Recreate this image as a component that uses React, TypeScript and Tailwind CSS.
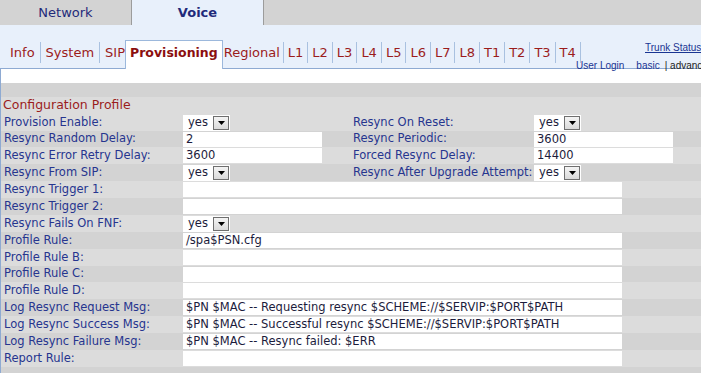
type Field =
  | { kind: 'select'; value: string }
  | { kind: 'text'; value: string }
  | { kind: 'wide'; value: string }

type Row = {
  label: string
  field: Field
  label2?: string
  field2?: Field
}

const subTabs = ['Info', 'System', 'SIP', 'Provisioning', 'Regional', 'L1', 'L2', 'L3', 'L4', 'L5', 'L6', 'L7', 'L8', 'T1', 'T2', 'T3', 'T4']

const rows: Row[] = [
  { label: 'Provision Enable:', field: { kind: 'select', value: 'yes' }, label2: 'Resync On Reset:', field2: { kind: 'select', value: 'yes' } },
  { label: 'Resync Random Delay:', field: { kind: 'text', value: '2' }, label2: 'Resync Periodic:', field2: { kind: 'text', value: '3600' } },
  { label: 'Resync Error Retry Delay:', field: { kind: 'text', value: '3600' }, label2: 'Forced Resync Delay:', field2: { kind: 'text', value: '14400' } },
  { label: 'Resync From SIP:', field: { kind: 'select', value: 'yes' }, label2: 'Resync After Upgrade Attempt:', field2: { kind: 'select', value: 'yes' } },
  { label: 'Resync Trigger 1:', field: { kind: 'wide', value: '' } },
  { label: 'Resync Trigger 2:', field: { kind: 'wide', value: '' } },
  { label: 'Resync Fails On FNF:', field: { kind: 'select', value: 'yes' } },
  { label: 'Profile Rule:', field: { kind: 'wide', value: '/spa$PSN.cfg' } },
  { label: 'Profile Rule B:', field: { kind: 'wide', value: '' } },
  { label: 'Profile Rule C:', field: { kind: 'wide', value: '' } },
  { label: 'Profile Rule D:', field: { kind: 'wide', value: '' } },
  { label: 'Log Resync Request Msg:', field: { kind: 'wide', value: '$PN $MAC -- Requesting resync $SCHEME://$SERVIP:$PORT$PATH' } },
  { label: 'Log Resync Success Msg:', field: { kind: 'wide', value: '$PN $MAC -- Successful resync $SCHEME://$SERVIP:$PORT$PATH' } },
  { label: 'Log Resync Failure Msg:', field: { kind: 'wide', value: '$PN $MAC -- Resync failed: $ERR' } },
  { label: 'Report Rule:', field: { kind: 'wide', value: '' } },
]

const SelectBox = ({ value }: { value: string }) => (
  <div className="flex items-center h-[16px] w-[47px] bg-white">
    <span className="pl-[5px] w-[30px] text-[#1c1c3c]">{value}</span>
    <div className="flex items-center justify-center w-[16px] h-[14px] border border-[#6f6f6f] bg-gradient-to-b from-[#f4f4f4] to-[#dadada]">
      <svg width="7" height="4" viewBox="0 0 7 4">
        <path d="M0 0 H7 L3.5 4 Z" fill="#000" />
      </svg>
    </div>
  </div>
)

const FieldCell = ({ field }: { field: Field }) => {
  if (field.kind === 'select') return <SelectBox value={field.value} />
  return (
    <div
      className={`h-[15px] bg-white pl-[3px] leading-[15px] text-[#1c1c3c] whitespace-nowrap overflow-hidden ${
        field.kind === 'wide' ? 'w-[439px]' : 'w-[139px]'
      }`}
    >
      {field.value}
    </div>
  )
}

export default function App() {
  return (
    <div className="w-[701px] h-[373px] overflow-hidden bg-white font-['DejaVu_Sans',Verdana,sans-serif]">
      {/* top tabs */}
      <div className="flex h-[25px] bg-[#d3d3d3] text-[13px] text-[#1f2a7a]">
        <div className="w-[132px] flex items-center justify-center border-r border-[#9c9c9c]">Network</div>
        <div className="w-[132px] flex items-center justify-center bg-[#e8f0fb] font-bold border-r border-[#9c9c9c]">Voice</div>
        <div className="flex-1" />
      </div>

      {/* sub tabs */}
      <div className="relative flex items-end h-[44px] pl-[5px] bg-[#e8f0fb] border-b border-[#8eaad2] text-[13px] text-[#9b1c1c]">
        {subTabs.map((t, i) => {
          if (t === 'Provisioning') {
            return (
              <div
                key={t}
                className="h-[29px] -mb-px px-[4px] pb-[3px] flex items-center bg-white border-x border-t border-[#9cb8dc] font-bold text-[12.5px] text-[#8b0f0f]"
              >
                {t}
              </div>
            )
          }
          const short = t.length === 2
          const beforeActive = subTabs[i + 1] === 'Provisioning'
          const afterActive = subTabs[i - 1] === 'Provisioning'
          return (
            <div
              key={t}
              className={`h-[21px] mb-[5px] flex items-center ${
                short ? 'px-[4px]' : afterActive ? 'pl-px pr-[3px]' : 'px-[5px]'
              } ${beforeActive ? 'pr-0' : 'border-r border-[#a9c1e0]'}`}
            >
              {t}
            </div>
          )
        })}
        <a className="absolute left-[645px] top-[15px] whitespace-nowrap font-['Liberation_Sans',Arial,sans-serif] text-[10px] text-[#1a3592] underline">
          Trunk Status
        </a>
        <div className="absolute left-[576px] top-[33px] flex whitespace-nowrap font-['Liberation_Sans',Arial,sans-serif] text-[10px] text-[#1a3592]">
          <span>User Login</span>
          <span className="ml-[12px]">basic</span>
          <span className="ml-[5px] text-[#222]">| advanced</span>
        </div>
      </div>

      {/* content */}
      <div className="border-l border-[#8eaad2] h-[304px] text-[11.5px] text-[#26358f]">
        <div className="h-[14px] bg-white" />
        <div className="h-[14px] bg-[#d3d3d3]" />
        <div className="h-[17px] bg-[#dcdcdc] pl-[2px] flex items-center text-[12.5px] text-[#9b1c1c]">
          Configuration Profile
        </div>
        {rows.map((r, i) => (
          <div
            key={r.label}
            className={`flex items-center ${i === 1 || i === 9 ? 'h-[16px]' : 'h-[17px]'} ${
              i % 2 === 0 ? 'bg-[#dcdcdc]' : 'bg-[#d3d3d3]'
            }`}
          >
            <div className="w-[182px] pl-[3px] whitespace-nowrap">{r.label}</div>
            {r.field.kind === 'wide' ? (
              <FieldCell field={r.field} />
            ) : (
              <>
                <div className="w-[167px]">
                  <FieldCell field={r.field} />
                </div>
                {r.label2 && r.field2 && (
                  <>
                    <div className="w-[184px] pl-[3px] whitespace-nowrap">{r.label2}</div>
                    <FieldCell field={r.field2} />
                  </>
                )}
              </>
            )}
          </div>
        ))}
        <div className="h-[16px] bg-[#d3d3d3]" />
      </div>
    </div>
  )
}
